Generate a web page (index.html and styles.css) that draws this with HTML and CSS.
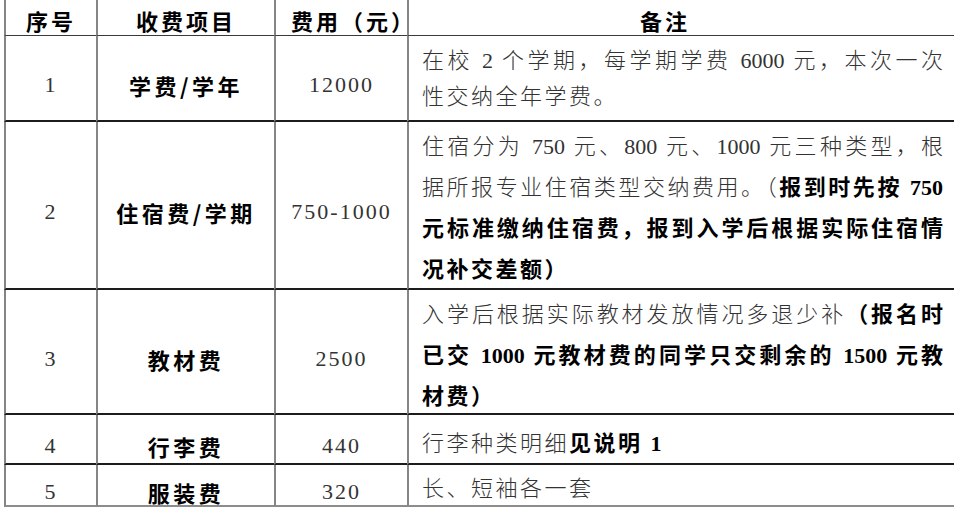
FILE: index.html
```html
<!DOCTYPE html>
<html lang="zh-CN">
<head>
<meta charset="utf-8">
<title>收费项目</title>
<link rel="stylesheet" href="styles.css">
</head>
<body>
<div class="sheet">
  <div class="cell mid head">序号</div>
  <div class="cell mid head cjk">收费项目</div>
  <div class="cell mid head cjk fee-head">费用（元）</div>
  <div class="cell mid head cjk note-head">备注</div>

  <div class="cell mid num">1</div>
  <div class="cell mid item">学费/学年</div>
  <div class="cell mid num">12000</div>
  <div class="cell note r1">
    <div class="ln full">在校 2 个学期，每学期学费 6000 元，本次一次</div>
    <div class="ln">性交纳全年学费。</div>
  </div>

  <div class="cell mid num">2</div>
  <div class="cell mid item">住宿费/学期</div>
  <div class="cell mid num">750-1000</div>
  <div class="cell note r2">
    <div class="ln full">住宿分为 750 元、800 元、1000 元三种类型，根</div>
    <div class="ln full">据所报专业住宿类型交纳费用。（<b>报到时先按 750</b></div>
    <div class="ln full"><b>元标准缴纳住宿费，报到入学后根据实际住宿情</b></div>
    <div class="ln"><b>况补交差额）</b></div>
  </div>

  <div class="cell mid num">3</div>
  <div class="cell mid item">教材费</div>
  <div class="cell mid num">2500</div>
  <div class="cell note r3">
    <div class="ln full">入学后根据实际教材发放情况多退少补<b>（报名时</b></div>
    <div class="ln full"><b>已交 1000 元教材费的同学只交剩余的 1500 元教</b></div>
    <div class="ln"><b>材费）</b></div>
  </div>

  <div class="cell mid num">4</div>
  <div class="cell mid item">行李费</div>
  <div class="cell mid num">440</div>
  <div class="cell note r4">
    <div class="ln">行李种类明细<b>见说明 1</b></div>
  </div>

  <div class="cell mid num last">5</div>
  <div class="cell mid item last">服装费</div>
  <div class="cell mid num last">320</div>
  <div class="cell note r5 last">
    <div class="ln">长、短袖各一套</div>
  </div>
</div>
</body>
</html>
```

FILE: styles.css
```css
html, body {
  margin: 0;
  padding: 0;
  background: #ffffff;
  overflow: hidden;
}

body {
  font-family: "Liberation Serif", "Noto Sans CJK SC", serif;
  font-size: 22px;
  color: #333333;
}

.sheet {
  display: grid;
  grid-template-columns: 92px 178px 133px 547px;
  grid-template-rows: 36px 86px 168px 125px 50px 42px;
  margin-left: 4px;
  width: 950px;
}

.cell {
  box-sizing: border-box;
  border-left: 2px solid #858585;
  border-bottom: 2px solid #1c1c1c;
  min-width: 0;
  white-space: nowrap;
}

.cell.last {
  border-bottom-color: #8c8c8c;
}

.mid {
  display: flex;
  align-items: center;
  justify-content: center;
  padding-top: 14px;
  line-height: 30px;
}

.head {
  padding-top: 5px;
  border-bottom: 1px solid #3a3a3a;
  font-family: "Noto Sans CJK SC", sans-serif;
  font-weight: 700;
  color: #000000;
  letter-spacing: 3px;
}

.fee-head {
  padding-left: 24px;
}

.note-head {
  padding-right: 33px;
}

.num {
  letter-spacing: 2px;
  color: #333333;
}

.item {
  font-family: "Noto Sans CJK SC", sans-serif;
  font-weight: 700;
  color: #000000;
  letter-spacing: 3.5px;
}

.note {
  padding-left: 13px;
  padding-right: 11px;
  font-weight: 300;
}

.note b {
  font-weight: 700;
  color: #000000;
}

.ln {
  line-height: 41px;
  letter-spacing: 2.5px;
}

.ln.full {
  letter-spacing: 0;
  text-align: justify;
  text-align-last: justify;
}

.r1 {
  padding-top: 7px;
}

.r1 .ln {
  line-height: 36px;
}

.r2 {
  padding-top: 4px;
}

.r3 {
  padding-top: 4px;
}

.r4 {
  padding-top: 7.5px;
}

.r5 {
  padding-top: 2.5px;
}
```
